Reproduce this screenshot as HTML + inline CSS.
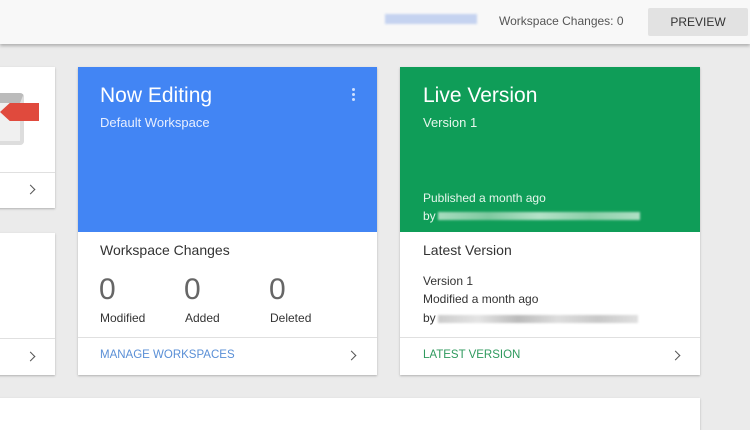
<!DOCTYPE html>
<html><head><style>
*{margin:0;padding:0;box-sizing:border-box}
body{width:750px;height:430px;overflow:hidden;background:#ebebeb;font-family:"Liberation Sans",sans-serif;position:relative;color:#212121}
.hdr{position:absolute;left:0;top:0;width:750px;height:44px;background:#f8f8f8;box-shadow:0 2px 3px rgba(0,0,0,.25)}
.card{position:absolute;background:#fff;box-shadow:0 1px 2px rgba(0,0,0,.25)}
.abs{position:absolute;white-space:nowrap}
.chev{position:absolute;width:7px;height:7px;border-right:1.5px solid #555;border-top:1.5px solid #555;transform:rotate(45deg)}
.blur{position:absolute;height:6px;background:linear-gradient(90deg,#ccc,#e4e4e4,#bbb,#ddd,#c8c8c8,#e0e0e0);filter:blur(1px)}
</style></head><body>
<div class="hdr">
  <div class="blur" style="left:385px;top:14px;width:92px;height:10px;background:#c5d3f0"></div>
  <div class="abs" style="left:499px;top:14px;font-size:12px;color:#555">Workspace Changes: 0</div>
  <div class="abs" style="left:648px;top:8px;width:100px;height:28px;background:#e2e2e2;border-radius:2px;font-size:12px;color:#333;text-align:center;line-height:28px">PREVIEW</div>
</div>

<div class="card" style="left:-4px;top:67px;width:59px;height:141px">
  <div class="abs" style="left:4px;top:26px;width:24px;height:52px;background:#f0f0f0;border:4px solid #ddd;border-left:none;border-top:10px solid #bbb;border-radius:0 4px 4px 0"></div>
  <div class="abs" style="left:4px;top:36px;width:39px;height:18px;background:#e04a3d;clip-path:polygon(25% 0,100% 0,100% 100%,25% 100%,0 50%)"></div>
  <div class="abs" style="left:0;top:105px;width:59px;border-top:1px solid #e0e0e0"></div>
  <div class="chev" style="left:31px;top:119px"></div>
</div>
<div class="card" style="left:-4px;top:233px;width:59px;height:142px">
  <div class="abs" style="left:0;top:105px;width:59px;border-top:1px solid #e0e0e0"></div>
  <div class="chev" style="left:31px;top:120px"></div>
</div>

<div class="card" style="left:78px;top:67px;width:299px;height:308px">
  <div class="abs" style="left:0;top:0;width:299px;height:165px;background:#4285f4"></div>
  <div class="abs" style="left:22px;top:17px;font-size:21px;color:#fff">Now Editing</div>
  <div class="abs" style="left:22px;top:48px;font-size:13px;color:#e8efff">Default Workspace</div>
  <div class="abs" style="left:274px;top:21px;width:3px;height:3px;background:#cfe0ff;border-radius:50%;box-shadow:0 5px 0 #cfe0ff,0 10px 0 #cfe0ff"></div>
  <div class="abs" style="left:22px;top:175px;font-size:14px;color:#333">Workspace Changes</div>
  <div class="abs" style="left:21px;top:206px;font-size:30px;color:#666">0</div>
  <div class="abs" style="left:106px;top:206px;font-size:30px;color:#666">0</div>
  <div class="abs" style="left:191px;top:206px;font-size:30px;color:#666">0</div>
  <div class="abs" style="left:22px;top:244px;font-size:12px;color:#333">Modified</div>
  <div class="abs" style="left:107px;top:244px;font-size:12px;color:#333">Added</div>
  <div class="abs" style="left:192px;top:244px;font-size:12px;color:#333">Deleted</div>
  <div class="abs" style="left:0;top:270px;width:299px;border-top:1px solid #e0e0e0"></div>
  <div class="abs" style="left:22px;top:282px;font-size:11.5px;color:#5a8fd6">MANAGE WORKSPACES</div>
  <div class="chev" style="left:270px;top:285px"></div>
</div>

<div class="card" style="left:400px;top:67px;width:300px;height:308px">
  <div class="abs" style="left:0;top:0;width:300px;height:165px;background:#0f9d58"></div>
  <div class="abs" style="left:23px;top:17px;font-size:21px;color:#fff">Live Version</div>
  <div class="abs" style="left:23px;top:48px;font-size:13px;color:#e6f6ec">Version 1</div>
  <div class="abs" style="left:23px;top:124px;font-size:12px;color:#e6f6ec">Published a month ago</div>
  <div class="abs" style="left:23px;top:142px;font-size:12px;color:#e6f6ec">by</div>
  <div class="blur" style="left:38px;top:145px;width:202px;height:8px;background:linear-gradient(90deg,#a8dcbf,#7fc9a0,#b5e2c8,#8ccfa9,#b0dfc4)"></div>
  <div class="abs" style="left:23px;top:175px;font-size:14px;color:#333">Latest Version</div>
  <div class="abs" style="left:23px;top:207px;font-size:12px;color:#333">Version 1</div>
  <div class="abs" style="left:23px;top:225px;font-size:12px;color:#333">Modified a month ago</div>
  <div class="abs" style="left:23px;top:244px;font-size:12px;color:#333">by</div>
  <div class="blur" style="left:38px;top:248px;width:200px;height:8px"></div>
  <div class="abs" style="left:0;top:270px;width:300px;border-top:1px solid #e0e0e0"></div>
  <div class="abs" style="left:23px;top:282px;font-size:11.5px;color:#2f9a5e">LATEST VERSION</div>
  <div class="chev" style="left:272px;top:285px"></div>
</div>

<div class="card" style="left:-4px;top:398px;width:704px;height:32px"></div>
</body></html>
